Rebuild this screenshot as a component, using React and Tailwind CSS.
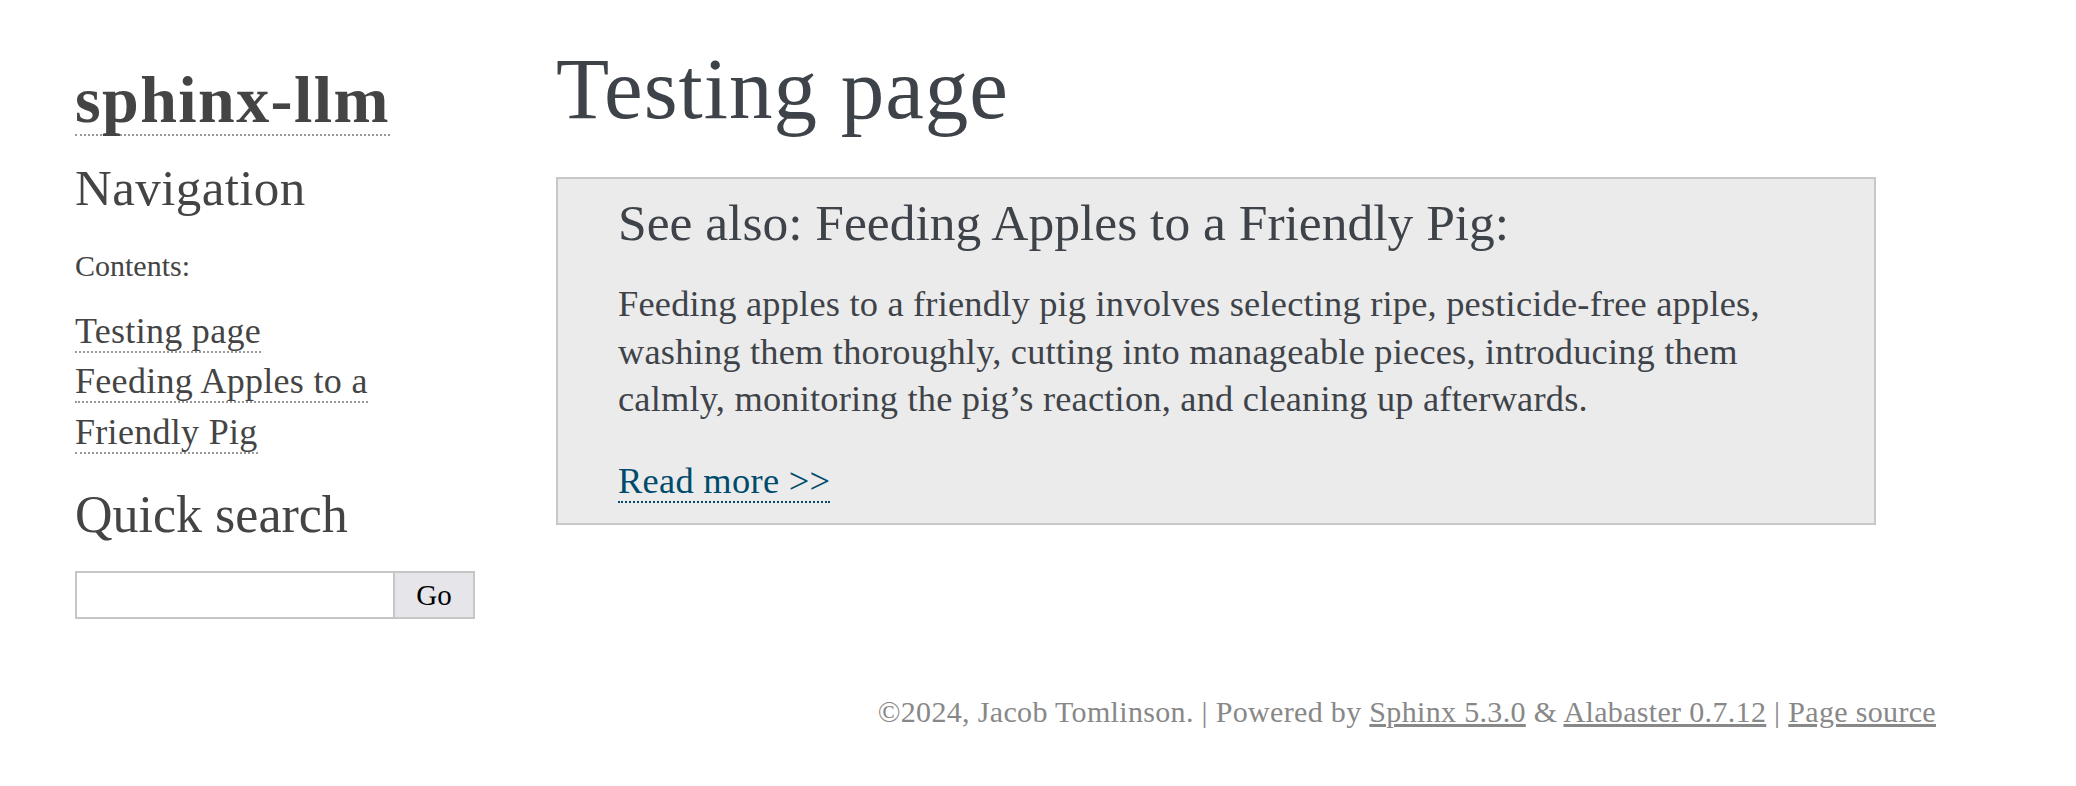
import React from 'react';

// ── Sidebar ───────────────────────────────────────────────────────────────────
function Sidebar() {
  return (
    <div className="w-[556px] shrink-0 pl-[75px] pt-[66px] text-[#444]">
      <a href="#" className="block w-fit text-[66px] font-bold leading-[68px] tracking-[1.4px] border-b-2 border-dotted border-[#999]">
        sphinx-llm
      </a>

      <h3 className="mt-[22px] text-[51px] leading-[60px] tracking-[0.4px]">Navigation</h3>

      <p className="mt-[28px] text-[30px] leading-[40px]">Contents:</p>

      <ul className="mt-[20px] text-[36px] leading-[50.4px] tracking-[0.3px] w-[330px]">
        <li>
          <a href="#" className="border-b-2 border-dotted border-[#999]">Testing page</a>
        </li>
        <li>
          <a href="#" className="border-b-2 border-dotted border-[#999]">Feeding Apples to a Friendly Pig</a>
        </li>
      </ul>

      <h3 className="mt-[28px] text-[52px] leading-[60px]">Quick search</h3>

      <form className="mt-[26px] flex h-[48px] w-[400px]" onSubmit={(e) => e.preventDefault()}>
        <input
          type="text"
          className="h-full w-[320px] border-2 border-[#c6c6c6] bg-white px-2 text-[28px] outline-none"
        />
        <button
          type="submit"
          className="h-full w-[80px] border-2 border-l-0 border-[#c6c6c6] bg-[#e6e5ea] text-[29px] leading-none text-black"
        >
          Go
        </button>
      </form>
    </div>
  );
}

// ── Main Page ─────────────────────────────────────────────────────────────────
export default function App() {
  return (
    <div className="min-h-screen bg-white font-['Liberation_Serif',serif]">
      <div className="w-[1936px]">
        <div className="flex">
          <Sidebar />

          {/* Body */}
          <div className="w-[1320px] shrink-0 pt-[39px] text-[#3E4349]">
            <h1 className="text-[87px] leading-[100px] tracking-[1px]">Testing page</h1>

            {/* See also box */}
            <div className="mt-[38px] border-2 border-[#c8c8c8] bg-[#ebebeb] px-[60px] pt-[14px] pb-[18px]">
              <p className="text-[51.5px] leading-[60px]">See also: Feeding Apples to a Friendly Pig:</p>
              <p className="mt-[28px] text-[36.4px] leading-[47.6px] tracking-[0.2px]">
                Feeding apples to a friendly pig involves selecting ripe, pesticide-free apples, washing them
                thoroughly, cutting into manageable pieces, introducing them calmly, monitoring the pig’s
                reaction, and cleaning up afterwards.
              </p>
              <p className="mt-[34px] text-[36.4px] leading-[47.6px] tracking-[0.3px]">
                <a href="#" className="text-[#004B6B] border-b-2 border-dotted border-[#004B6B]">
                  Read more &gt;&gt;
                </a>
              </p>
            </div>
          </div>
        </div>

        {/* Footer */}
        <div className="mt-[73px] text-right text-[30px] leading-[40px] tracking-[0.33px] text-[#888]">
          ©2024, Jacob Tomlinson. | Powered by{' '}
          <a href="#" className="underline">Sphinx 5.3.0</a> &amp;{' '}
          <a href="#" className="underline">Alabaster 0.7.12</a> |{' '}
          <a href="#" className="underline">Page source</a>
        </div>
      </div>
    </div>
  );
}
